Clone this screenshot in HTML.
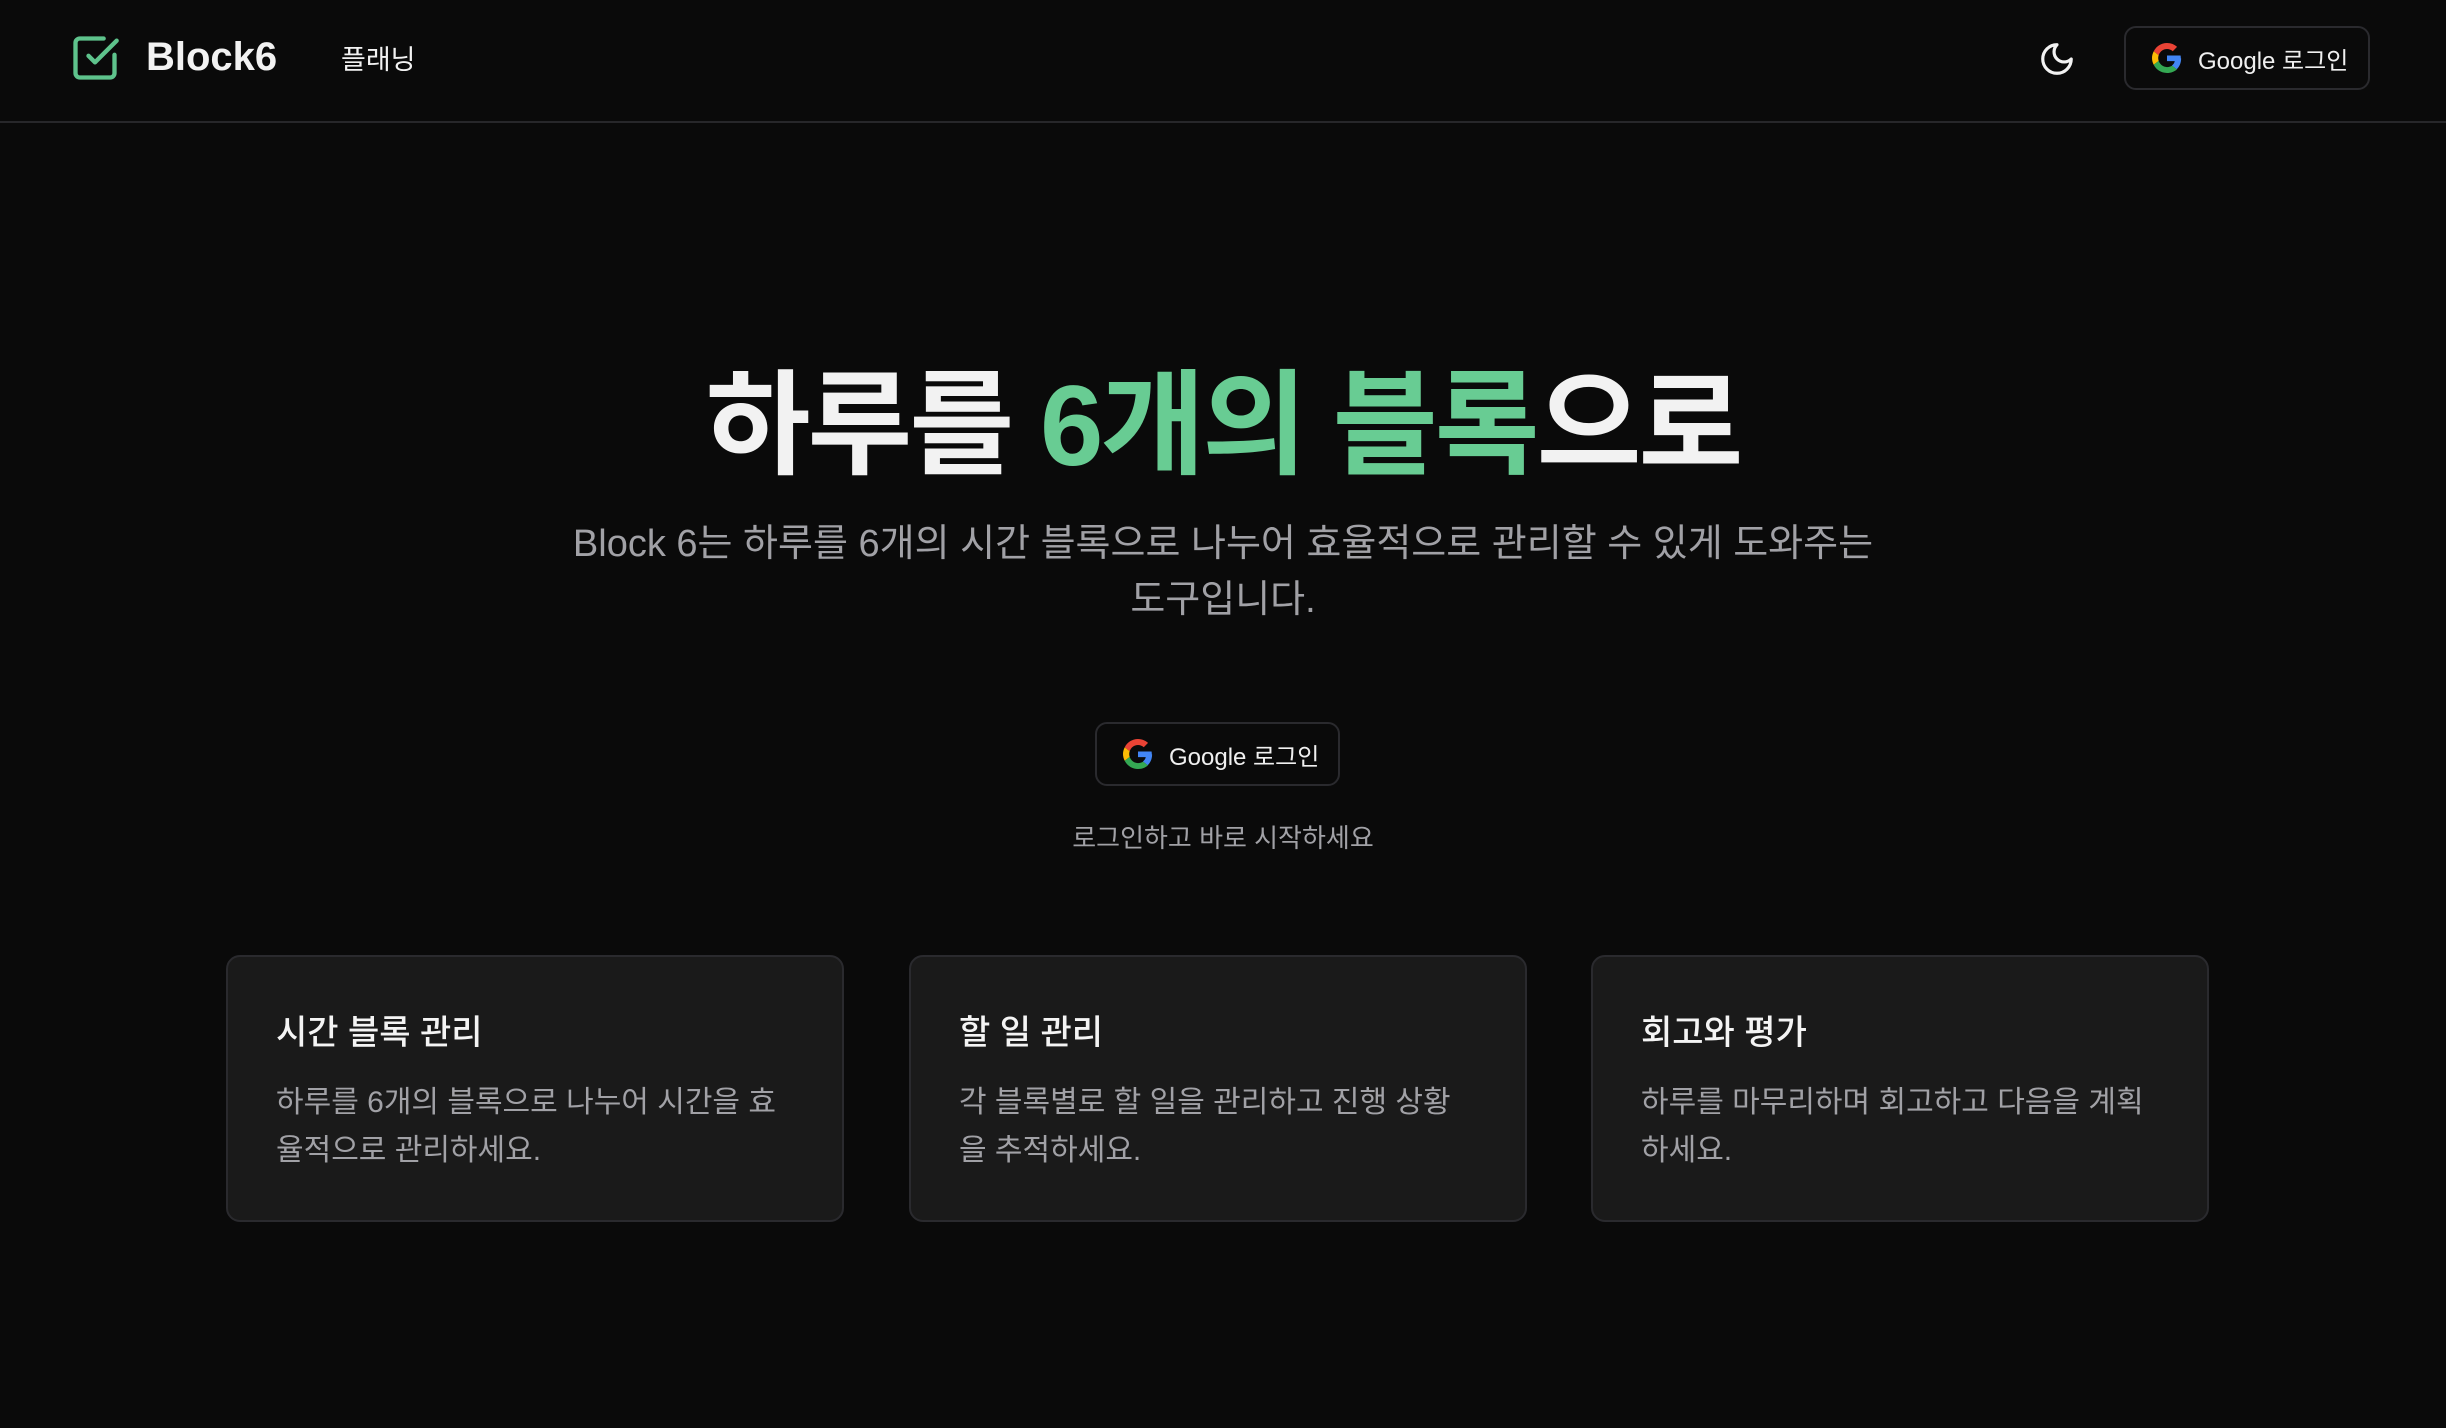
<!DOCTYPE html>
<html><head><meta charset="utf-8"><style>
*{margin:0;padding:0;box-sizing:border-box}
body{width:2446px;height:1428px;background:#0a0a0a;font-family:"Liberation Sans","Noto Sans CJK KR",sans-serif;color:#f2f2f2;position:relative;overflow:hidden}
.hdr{position:absolute;left:0;top:0;width:2446px;height:123px;border-bottom:2px solid #27272a}
.abs{position:absolute}
.btn{position:absolute;border:2px solid #2a2a2e;border-radius:12px;display:flex;align-items:center;font-size:24px;color:#f0f0f0}
.card{position:absolute;top:955px;width:618px;height:267px;background:#1a1a1a;border:2px solid #2a2a2e;border-radius:14px;padding:50px 48px}
.card h3{font-size:34px;font-weight:500;margin-top:4px;line-height:44px;color:#f4f4f4}
.card p{font-size:30px;line-height:48px;color:#a1a1a6;margin-top:24px}
</style></head><body>
<div class="hdr">
<svg class="abs" style="left:69px;top:32px" width="52" height="52" viewBox="0 0 24 24" fill="none" stroke="#5ec38c" stroke-width="2" stroke-linecap="round" stroke-linejoin="round"><path d="M21 10.5V19a2 2 0 0 1-2 2H5a2 2 0 0 1-2-2V5a2 2 0 0 1 2-2h11"/><path d="M9 11l3 3L22 4"/></svg>
<div class="abs" style="left:146px;top:35px;font-size:40px;font-weight:700;">Block6</div>
<div class="abs" style="left:341px;top:38px;font-size:27px;">플래닝</div>
<svg class="abs" style="left:2038px;top:40px" width="38" height="38" viewBox="0 0 24 24" fill="none" stroke="#f2f2f2" stroke-width="2" stroke-linecap="round" stroke-linejoin="round"><path d="M12 3a6 6 0 0 0 9 9 9 9 0 1 1-9-9Z"/></svg>
<div class="btn" style="left:2124px;top:26px;width:246px;height:64px;padding-left:26px">
<svg width="30" height="30" viewBox="0 0 48 48"><path fill="#EA4335" d="M24 9.5c3.5 0 6.7 1.2 9.2 3.6l6.9-6.9C35.9 2.4 30.5 0 24 0 14.6 0 6.6 5.4 2.7 13.3l8 6.2C12.6 13.7 17.8 9.5 24 9.5z"/><path fill="#4285F4" d="M46.1 24.5c0-1.6-.1-3.1-.4-4.5H24v9h12.4c-.5 2.9-2.2 5.3-4.6 6.9l7.7 6c4.5-4.2 7.1-10.3 7.1-17.4z"/><path fill="#FBBC05" d="M10.7 28.5c-.5-1.4-.8-2.9-.8-4.5s.3-3.1.8-4.5l-8-6.2C1 16.6 0 20.2 0 24s1 7.4 2.7 10.7l8-6.2z"/><path fill="#34A853" d="M24 48c6.5 0 11.9-2.1 15.9-5.8l-7.7-6c-2.1 1.4-4.9 2.3-8.2 2.3-6.2 0-11.4-4.2-13.3-9.9l-8 6.2C6.6 42.6 14.6 48 24 48z"/></svg>
<span style="margin-left:16px">Google 로그인</span></div>
</div>
<div class="abs" style="left:0;width:2446px;top:352px;text-align:center;font-size:114px;font-weight:700;letter-spacing:-3px;line-height:150px;">하루를 <span style="color:#68cc93">6개의 블록</span>으로</div>
<div class="abs" style="left:473px;width:1500px;top:516px;text-align:center;font-size:38px;line-height:56px;color:#a1a1a6;">Block 6는 하루를 6개의 시간 블록으로 나누어 효율적으로 관리할 수 있게 도와주는<br>도구입니다.</div>
<div class="btn" style="left:1095px;top:722px;width:245px;height:64px;padding-left:26px">
<svg width="30" height="30" viewBox="0 0 48 48"><path fill="#EA4335" d="M24 9.5c3.5 0 6.7 1.2 9.2 3.6l6.9-6.9C35.9 2.4 30.5 0 24 0 14.6 0 6.6 5.4 2.7 13.3l8 6.2C12.6 13.7 17.8 9.5 24 9.5z"/><path fill="#4285F4" d="M46.1 24.5c0-1.6-.1-3.1-.4-4.5H24v9h12.4c-.5 2.9-2.2 5.3-4.6 6.9l7.7 6c4.5-4.2 7.1-10.3 7.1-17.4z"/><path fill="#FBBC05" d="M10.7 28.5c-.5-1.4-.8-2.9-.8-4.5s.3-3.1.8-4.5l-8-6.2C1 16.6 0 20.2 0 24s1 7.4 2.7 10.7l8-6.2z"/><path fill="#34A853" d="M24 48c6.5 0 11.9-2.1 15.9-5.8l-7.7-6c-2.1 1.4-4.9 2.3-8.2 2.3-6.2 0-11.4-4.2-13.3-9.9l-8 6.2C6.6 42.6 14.6 48 24 48z"/></svg>
<span style="margin-left:16px">Google 로그인</span></div>
<div class="abs" style="left:0;width:2446px;top:818px;text-align:center;font-size:26px;color:#a1a1a6;">로그인하고 바로 시작하세요</div>
<div class="card" style="left:226px"><h3>시간 블록 관리</h3><p>하루를 6개의 블록으로 나누어 시간을 효율적으로 관리하세요.</p></div>
<div class="card" style="left:909px"><h3>할 일 관리</h3><p>각 블록별로 할 일을 관리하고 진행 상황을 추적하세요.</p></div>
<div class="card" style="left:1591px"><h3>회고와 평가</h3><p>하루를 마무리하며 회고하고 다음을 계획하세요.</p></div>
</body></html>
